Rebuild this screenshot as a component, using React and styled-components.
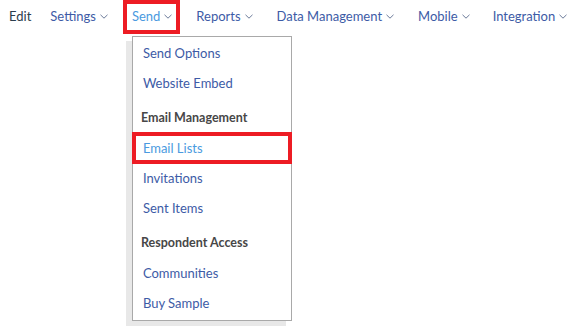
import React from 'react'
import styled, { createGlobalStyle } from 'styled-components'

const GlobalStyle = createGlobalStyle`
  html, body {
    margin: 0;
    background: #fff;
    font-family: Lato, "Noto Sans", sans-serif;
  }
`;

const navItems = [
  { label: 'Settings', gap: 19 },
  { label: 'Send', gap: 24, active: true },
  { label: 'Reports', gap: 24 },
  { label: 'Data Management', gap: 24 },
  { label: 'Mobile', gap: 24 },
  { label: 'Integration', gap: 23 },
];

const menu = [
  { label: 'Send Options' },
  { label: 'Website Embed' },
  { label: 'Email Management', header: true },
  { label: 'Email Lists', marked: true },
  { label: 'Invitations' },
  { label: 'Sent Items' },
  { label: 'Respondent Access', header: true },
  { label: 'Communities' },
  { label: 'Buy Sample' },
];

const Chevron = () => (
  <svg width="8" height="5" viewBox="0 0 8 5">
    <path d="M0.5 0.8 L4 4.2 L7.5 0.8" fill="none" stroke="#6b7a99" strokeWidth="1" />
  </svg>
);

export default function App() {
  return (
    <Page>
      <GlobalStyle />
      <Nav>
        <EditLabel>Edit</EditLabel>
        {navItems.map((item) => (
          <NavItem key={item.label} $gap={item.gap} $active={item.active}>
            <span>{item.label}</span>
            <Chevron />
            {item.active && (
              <Dropdown>
                {menu.map((m) =>
                  m.header ? (
                    <GroupTitle key={m.label}>{m.label}</GroupTitle>
                  ) : (
                    <MenuItem key={m.label} $marked={m.marked}>
                      {m.label}
                    </MenuItem>
                  )
                )}
              </Dropdown>
            )}
          </NavItem>
        ))}
      </Nav>
    </Page>
  );
}

const Page = styled.div`
  min-height: 333px;
  width: 578px;
  position: relative;
`;

const Nav = styled.nav`
  display: flex;
  align-items: center;
  height: 31px;
  padding-left: 9px;
  font-size: 13px;
  white-space: nowrap;
`;

const EditLabel = styled.span`
  color: #2c3d4d;
  flex-shrink: 0;
`;

const NavItem = styled.div`
  position: relative;
  display: flex;
  flex-shrink: 0;
  align-items: center;
  gap: 4px;
  margin-left: ${(p) => p.$gap}px;
  height: 31px;
  color: ${(p) => (p.$active ? '#4a9ae0' : '#3d5ba6')};
  cursor: pointer;
  svg {
    margin-top: 1px;
  }
  ${(p) =>
    p.$active &&
    `
    &::before {
      content: '';
      position: absolute;
      left: -9px;
      right: -8px;
      top: 0;
      height: 34px;
      box-sizing: border-box;
      border: 4px solid #ed1c24;
      pointer-events: none;
    }
  `}
`;

const Dropdown = styled.div`
  position: absolute;
  top: 36px;
  left: 0;
  width: 158px;
  padding: 1px 0 2px;
  background: #fff;
  border: 1px solid #a9a9a9;
  box-shadow: -6px 5px 0 #e8e8e8;
  z-index: 2;
`;

const MenuItem = styled.div`
  height: 30px;
  line-height: 30px;
  padding-left: 10px;
  color: ${(p) => (p.$marked ? '#4a9ae0' : '#3d5ba6')};
  ${(p) =>
    p.$marked &&
    `
    outline: 4px solid #ed1c24;
    outline-offset: -3px;
  `}
`;

const GroupTitle = styled.div`
  height: 30px;
  line-height: 30px;
  padding: 5px 0 0 8px;
  color: #474747;
  font-weight: 700;
  font-size: 12.5px;
`;
